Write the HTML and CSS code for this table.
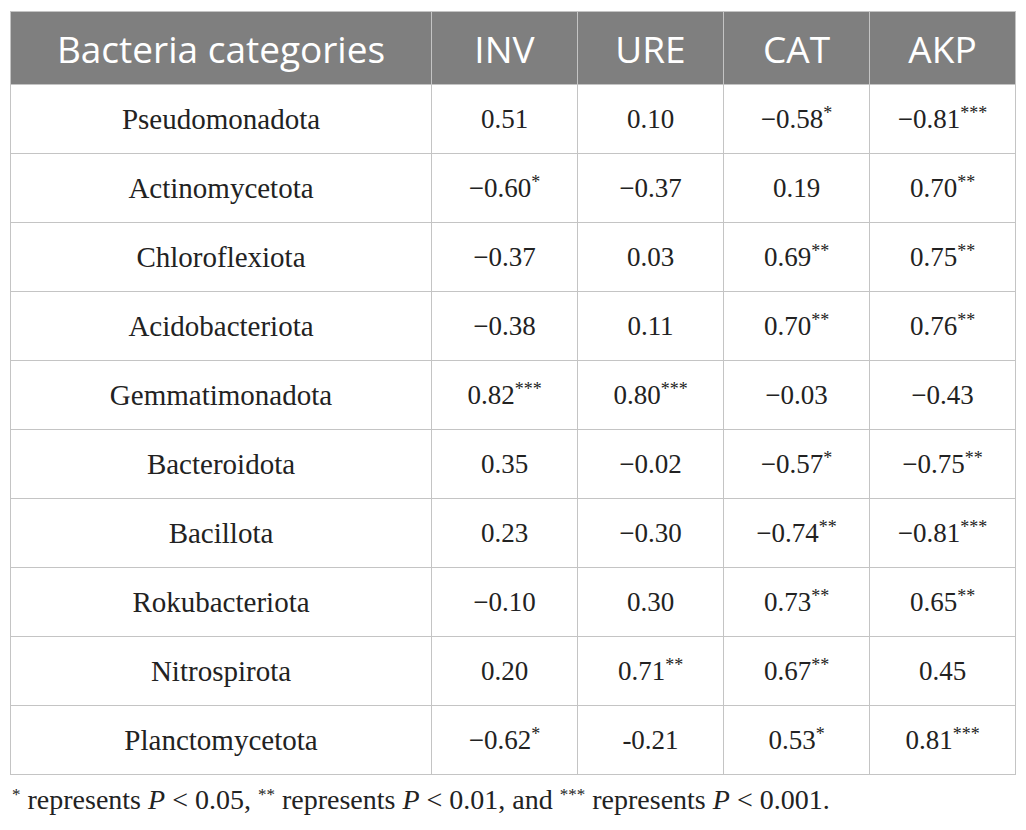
FILE: index.html
```html
<html>
<head>
<title>Bacteria categories and soil enzymes</title>
<link rel="stylesheet" href="styles.css">
</head>
<body>

<table class="corr">
<colgroup>
<col class="c-name">
<col class="c-val">
<col class="c-val">
<col class="c-val">
<col class="c-val">
</colgroup>
<thead>
<tr><th>Bacteria categories</th><th>INV</th><th>URE</th><th>CAT</th><th>AKP</th></tr>
</thead>
<tbody>
<tr><td>Pseudomonadota</td><td>0.51</td><td>0.10</td><td>&minus;0.58<sup>*</sup></td><td>&minus;0.81<sup>***</sup></td></tr>
<tr><td>Actinomycetota</td><td>&minus;0.60<sup>*</sup></td><td>&minus;0.37</td><td>0.19</td><td>0.70<sup>**</sup></td></tr>
<tr><td>Chloroflexiota</td><td>&minus;0.37</td><td>0.03</td><td>0.69<sup>**</sup></td><td>0.75<sup>**</sup></td></tr>
<tr><td>Acidobacteriota</td><td>&minus;0.38</td><td>0.11</td><td>0.70<sup>**</sup></td><td>0.76<sup>**</sup></td></tr>
<tr><td>Gemmatimonadota</td><td>0.82<sup>***</sup></td><td>0.80<sup>***</sup></td><td>&minus;0.03</td><td>&minus;0.43</td></tr>
<tr><td>Bacteroidota</td><td>0.35</td><td>&minus;0.02</td><td>&minus;0.57<sup>*</sup></td><td>&minus;0.75<sup>**</sup></td></tr>
<tr><td>Bacillota</td><td>0.23</td><td>&minus;0.30</td><td>&minus;0.74<sup>**</sup></td><td>&minus;0.81<sup>***</sup></td></tr>
<tr><td>Rokubacteriota</td><td>&minus;0.10</td><td>0.30</td><td>0.73<sup>**</sup></td><td>0.65<sup>**</sup></td></tr>
<tr><td>Nitrospirota</td><td>0.20</td><td>0.71<sup>**</sup></td><td>0.67<sup>**</sup></td><td>0.45</td></tr>
<tr><td>Planctomycetota</td><td>&minus;0.62<sup>*</sup></td><td>-0.21</td><td>0.53<sup>*</sup></td><td>0.81<sup>***</sup></td></tr>
</tbody>
</table>

<p class="note"><sup>*</sup> represents <i>P</i> &lt; 0.05, <sup>**</sup> represents <i>P</i> &lt; 0.01, and <sup>***</sup> represents <i>P</i> &lt; 0.001.</p>

</body>
</html>
```

FILE: styles.css
```css
body{margin:0;padding:11px 10px 0 10px;background:#fff;color:#222;font-family:"Liberation Serif","Times New Roman",serif;}
.corr{border-collapse:collapse;width:1006px;table-layout:fixed;}
.c-name{width:421px;}
.c-val{width:146px;}
.corr th{background:#7f7f7f;color:#fff;font-family:"Open Sans","Noto Sans",sans-serif;font-weight:normal;font-size:37px;height:73px;padding:0;border:1px solid #c4c4c4;text-align:center;}
.corr td{height:69px;padding:0;border:1px solid #c4c4c4;text-align:center;font-size:27px;}
.corr td:first-child{font-size:29px;}
.corr sup{font-size:18px;vertical-align:9px;line-height:0;}
.note{margin:9px 0 0 2px;font-size:28px;}
.note sup{font-size:17px;vertical-align:9px;line-height:0;}
```
